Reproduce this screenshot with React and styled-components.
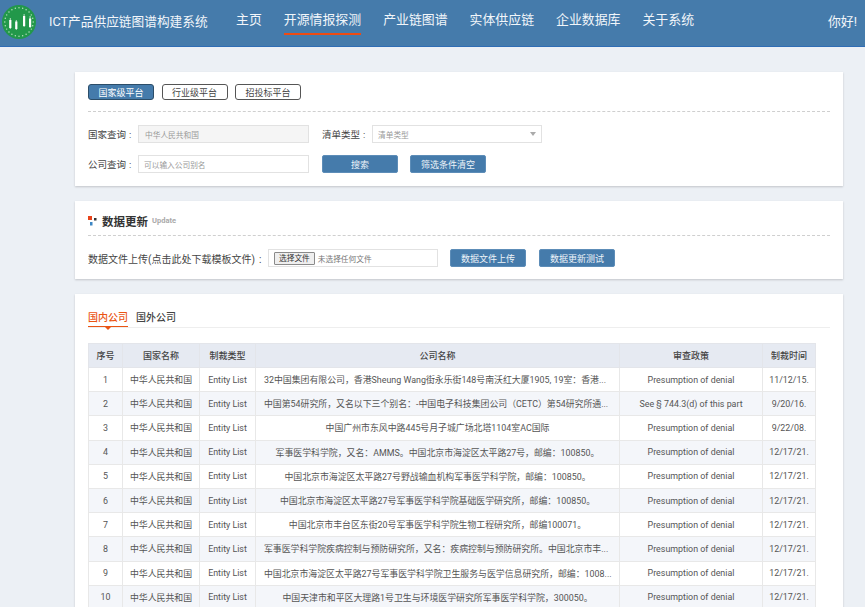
import React from 'react'
import styled, { createGlobalStyle } from 'styled-components'

const Global = createGlobalStyle`
  html, body {
    margin: 0;
    height: 607px;
    overflow: hidden;
    background: #ecf0f5;
    font-family: Roboto, "Liberation Sans", "Noto Sans CJK SC", sans-serif;
    color: #444;
  }
  * { box-sizing: border-box; }
`

const Header = styled.header`
  height: 47px;
  display: flex;
  align-items: center;
  padding: 0 8px 2px 2px;
  background: #457bab;
  border-bottom: 1px solid #2f6db5;
  color: #f2f6fa;
`
const Logo = styled.svg`
  width: 34px;
  height: 34px;
  flex: none;
  margin-right: 13px;
`
const Title = styled.div`
  font-size: 12.7px;
  width: 187px;
  margin-bottom: 3px;
  white-space: nowrap;
`
const Nav = styled.nav`
  display: flex;
  height: 100%;
  padding-bottom: 4px;
  align-items: center;
  flex: 1;
`
const NavItem = styled.a`
  position: relative;
  font-size: 12.9px;
  line-height: 20px;
  white-space: nowrap;
  margin-right: ${(props) => props.gap}px;
  ${(props) =>
    props.active &&
    `&:after {
      content: '';
      position: absolute;
      left: 0;
      right: 0;
      top: 23px;
      height: 2px;
      background: #ee4b12;
    }`}
`
const Greeting = styled.div`
  font-size: 12.9px;
  margin-bottom: 4px;
`

const Page = styled.main`
  padding: 25px 22px 0 75px;
  display: flex;
  flex-direction: column;
  gap: 15px;
`
const Card = styled.section`
  background: #fff;
  box-shadow: 0 1px 2px rgba(0, 0, 0, 0.18);
  padding: ${(props) => props.padding};
`
const PlatformRow = styled.div`
  display: flex;
  gap: 7.5px;
  padding-bottom: 11px;
  border-bottom: 1px dashed #cfcfcf;
`
const PlatformButton = styled.button`
  width: 66px;
  height: 16px;
  padding: 0;
  border-radius: 3px;
  border: 1px solid ${(props) => (props.active ? '#2c4d68' : '#555')};
  background: ${(props) => (props.active ? '#457bab' : '#fff')};
  color: ${(props) => (props.active ? '#fff' : '#444')};
  font: 9px Roboto, "Noto Sans CJK SC", sans-serif;
`
const FormGrid = styled.div`
  display: grid;
  grid-template-columns: 50px 184px 50px auto 1fr;
  grid-auto-rows: 18px;
  row-gap: 12px;
  align-items: center;
  margin-top: 13px;
`
const Label = styled.label`
  font-size: 9.5px;
  color: #444;
  white-space: nowrap;
  &:after {
    content: ':';
    margin-left: 3px;
  }
`
const Field = styled.div`
  width: ${(props) => props.width}px;
  height: 18px;
  display: flex;
  align-items: center;
  justify-content: space-between;
  padding: 0 5px 0 ${(props) => (props.indent ? 6 : 5)}px;
  border: 1px solid #e2e2e2;
  background: ${(props) => (props.muted ? '#f5f5f5' : '#fff')};
  color: #999;
  font-size: 7.7px;
`
const Caret = styled.span`
  width: 0;
  height: 0;
  border-left: 3.5px solid transparent;
  border-right: 3.5px solid transparent;
  border-top: 4px solid #aaa;
`
const ButtonRow = styled.div`
  grid-column: 3 / 6;
  display: flex;
  gap: 12px;
`
const Action = styled.button`
  width: 76px;
  height: 18px;
  padding: 0;
  border: 1px solid #5d8db8;
  border-radius: 2px;
  background: #457bab;
  color: #eef4f9;
  font: 9px Roboto, "Noto Sans CJK SC", sans-serif;
  white-space: nowrap;
`

const SectionHead = styled.div`
  display: flex;
  align-items: center;
  height: 27px;
  padding-bottom: 3px;
  border-bottom: 1px dashed #cfcfcf;
`
const HeadMark = styled.svg`
  width: 9px;
  height: 10px;
  margin-right: 5px;
`
const HeadTitle = styled.h2`
  margin: 0;
  font-size: 11.5px;
  font-weight: 700;
  color: #333;
`
const HeadSub = styled.span`
  margin-left: 4px;
  font-size: 7.5px;
  font-weight: 700;
  color: #a9a9a9;
`
const UploadRow = styled.div`
  display: flex;
  align-items: center;
  margin-top: 13px;
`
const UploadLabel = styled.span`
  width: 180px;
  font-size: 10px;
  white-space: nowrap;
  &:after {
    content: ':';
    margin-left: 4px;
  }
`
const FileBox = styled.div`
  width: 170px;
  height: 18px;
  display: flex;
  align-items: center;
  gap: 3px;
  padding-left: 5px;
  margin-right: 12px;
  border: 1px solid #e2e2e2;
  font-size: 7.7px;
  color: #777;
`
const FileButton = styled.span`
  height: 13px;
  padding: 0 4px;
  line-height: 11px;
  border: 1px solid #8a8a8a;
  border-radius: 1px;
  background: #efefef;
  color: #333;
`
const UploadButtons = styled.div`
  display: flex;
  gap: 13px;
`

const Tabs = styled.div`
  display: flex;
  align-items: flex-end;
  gap: 8px;
  height: 19px;
  border-bottom: 1px solid #eee;
`
const Tab = styled.div`
  position: relative;
  height: 19px;
  font-size: 10px;
  line-height: 19px;
  font-weight: 500;
  color: ${(props) => (props.active ? '#ea5413' : '#444')};
  ${(props) =>
    props.active &&
    `border-bottom: 1px solid #ea5413;
    &:after {
      content: '';
      position: absolute;
      left: 50%;
      bottom: -4px;
      margin-left: -3px;
      border-left: 3px solid transparent;
      border-right: 3px solid transparent;
      border-top: 3px solid #ea5413;
    }`}
`
const Table = styled.table`
  width: 727px;
  margin-top: 15px;
  border-collapse: collapse;
  table-layout: fixed;
  font-size: 8.9px;
  color: #555;
`
const Th = styled.th`
  height: 24px;
  padding: 0;
  background: #e6eaf2;
  border: 1px solid #e3e5ea;
  font-weight: 500;
  font-size: 9px;
  color: #444;
  width: ${(props) => props.width}px;
`
const Row = styled.tr`
  background: ${(props) => (props.odd ? '#f4f6fa' : '#fff')};
`
const Td = styled.td`
  height: 24.2px;
  padding: 0 ${(props) => (props.wide ? 8 : 1)}px;
  text-align: ${(props) => (props.clipped ? 'left' : 'center')};
  border: 1px solid #e8e8e8;
  white-space: nowrap;
`

const navItems = [
  { label: '主页', gap: 22 },
  { label: '开源情报探测', gap: 22, active: true },
  { label: '产业链图谱', gap: 22 },
  { label: '实体供应链', gap: 22 },
  { label: '企业数据库', gap: 22 },
  { label: '关于系统', gap: 0 },
]

const columns = [
  { label: '序号', width: 34 },
  { label: '国家名称', width: 77 },
  { label: '制裁类型', width: 56 },
  { label: '公司名称', width: 364 },
  { label: '审查政策', width: 143 },
  { label: '制裁时间', width: 53 },
]

const denial = 'Presumption of denial'

const rows = [
  ['32中国集团有限公司，香港Sheung Wang街永乐街148号南沃红大厦1905, 19室：香港...', denial, '11/12/15.'],
  ['中国第54研究所，又名以下三个别名：-中国电子科技集团公司（CETC）第54研究所通...', 'See § 744.3(d) of this part', '9/20/16.'],
  ['中国广州市东风中路445号月子城广场北塔1104室AC国际', denial, '9/22/08.'],
  ['军事医学科学院，又名：AMMS。中国北京市海淀区太平路27号，邮编：100850。', denial, '12/17/21.'],
  ['中国北京市海淀区太平路27号野战输血机构军事医学科学院，邮编：100850。', denial, '12/17/21.'],
  ['中国北京市海淀区太平路27号军事医学科学院基础医学研究所，邮编：100850。', denial, '12/17/21.'],
  ['中国北京市丰台区东街20号军事医学科学院生物工程研究所，邮编100071。', denial, '12/17/21.'],
  ['军事医学科学院疾病控制与预防研究所，又名：疾病控制与预防研究所。中国北京市丰...', denial, '12/17/21.'],
  ['中国北京市海淀区太平路27号军事医学科学院卫生服务与医学信息研究所，邮编：1008...', denial, '12/17/21.'],
  ['中国天津市和平区大理路1号卫生与环境医学研究所军事医学科学院，300050。', denial, '12/17/21.'],
]

function LogoMark() {
  const dots = Array.from({ length: 24 }, (_, i) => {
    const a = (i / 24) * Math.PI * 2
    return <circle key={i} cx={17 + 14.2 * Math.cos(a)} cy={17 + 14.2 * Math.sin(a)} r="0.7" fill="#bfe3c4" />
  })
  return (
    <Logo viewBox="0 0 34 34">
      <circle cx="17" cy="17" r="17" fill="#22984a" />
      {dots}
      <g fill="#fff">
        <rect x="7.2" y="15" width="2.2" height="8" />
        <rect x="13.2" y="16.5" width="2.2" height="7.5" />
        <rect x="21" y="11" width="2.2" height="10" />
        <rect x="27" y="13.5" width="2.2" height="8.5" />
      </g>
      <path d="M8.3 13v11M14.3 15v10M22.1 9v13M28.1 11v12" stroke="#fff" strokeWidth="0.7" />
    </Logo>
  )
}

export default function App() {
  return (
    <>
      <Global />
      <Header>
        <LogoMark />
        <Title>ICT产品供应链图谱构建系统</Title>
        <Nav>
          {navItems.map((item) => (
            <NavItem key={item.label} active={item.active} gap={item.gap}>
              {item.label}
            </NavItem>
          ))}
        </Nav>
        <Greeting>你好!</Greeting>
      </Header>
      <Page>
        <Card padding="12px 13px 13px">
          <PlatformRow>
            <PlatformButton active>国家级平台</PlatformButton>
            <PlatformButton>行业级平台</PlatformButton>
            <PlatformButton>招投标平台</PlatformButton>
          </PlatformRow>
          <FormGrid>
            <Label>国家查询</Label>
            <Field muted indent width={171}>中华人民共和国</Field>
            <Label>清单类型</Label>
            <Field width={170}>清单类型<Caret /></Field>
            <span />
            <Label>公司查询</Label>
            <Field width={171}>可以输入公司别名</Field>
            <ButtonRow>
              <Action>搜索</Action>
              <Action>筛选条件清空</Action>
            </ButtonRow>
          </FormGrid>
        </Card>
        <Card padding="8px 13px 12px">
          <SectionHead>
            <HeadMark viewBox="0 0 9 10">
              <rect x="0" y="0" width="4" height="4" fill="#e8431a" />
              <rect x="6" y="2" width="2.5" height="2.5" fill="#333" />
              <rect x="2" y="6" width="2.5" height="3.5" fill="#3c86c4" />
            </HeadMark>
            <HeadTitle>数据更新</HeadTitle>
            <HeadSub>Update</HeadSub>
          </SectionHead>
          <UploadRow>
            <UploadLabel>数据文件上传(点击此处下载模板文件)</UploadLabel>
            <FileBox>
              <FileButton>选择文件</FileButton>
              未选择任何文件
            </FileBox>
            <UploadButtons>
              <Action>数据文件上传</Action>
              <Action>数据更新测试</Action>
            </UploadButtons>
          </UploadRow>
        </Card>
        <Card padding="15px 13px 0">
          <Tabs>
            <Tab active>国内公司</Tab>
            <Tab>国外公司</Tab>
          </Tabs>
          <Table>
            <thead>
              <tr>
                {columns.map((col) => (
                  <Th key={col.label} width={col.width}>{col.label}</Th>
                ))}
              </tr>
            </thead>
            <tbody>
              {rows.map((row, i) => (
                <Row key={i} odd={i % 2 === 1}>
                  <Td>{i + 1}</Td>
                  <Td>中华人民共和国</Td>
                  <Td>Entity List</Td>
                  <Td wide clipped={row[0].endsWith('...')}>{row[0]}</Td>
                  <Td>{row[1]}</Td>
                  <Td>{row[2]}</Td>
                </Row>
              ))}
            </tbody>
          </Table>
        </Card>
      </Page>
    </>
  )
}
